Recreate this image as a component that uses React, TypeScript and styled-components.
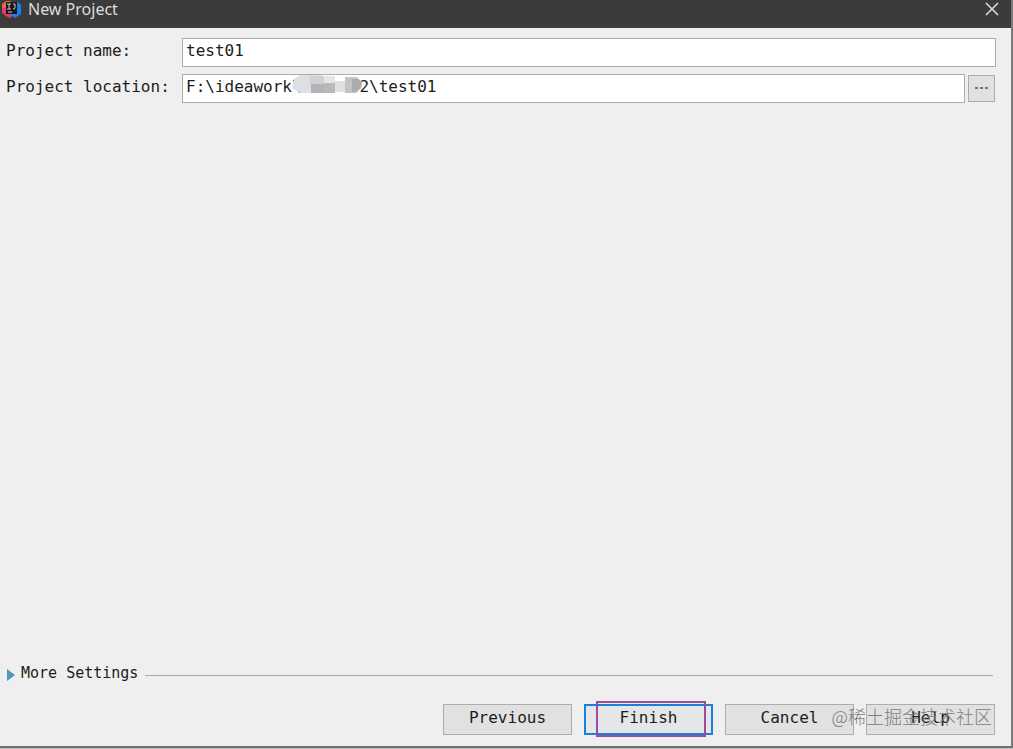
import React from 'react';
import styled, { createGlobalStyle } from 'styled-components';

const mono = '"DejaVu Sans Mono", "Liberation Mono", monospace';

const GlobalStyle = createGlobalStyle`
  *, *::before, *::after { box-sizing: border-box; }
  body { margin: 0; background: #bdbdbd; }
`;

const Window = styled.div`
  display: flex;
  flex-direction: column;
  min-height: calc(100vh - 1px);
  background: #efefef;
  border-right: 2px solid #77797a;
  border-bottom: 2px solid #727272;
`;

const TitleBar = styled.header`
  display: flex;
  align-items: flex-start;
  height: 28px;
  padding: 0 12px 0 2px;
  background: #3b3b3b;
`;

const Title = styled.h1`
  flex: 1;
  margin: 0 0 0 7px;
  font: 400 16px/19px "Noto Sans", "Open Sans", sans-serif;
  color: #dcdcdc;
`;

const CloseButton = styled.button`
  display: flex;
  padding: 2px 0 0;
  border: 0;
  background: none;
`;

const Fields = styled.form`
  display: flex;
  flex-direction: column;
  gap: 7px;
  padding: 10px 15px 0 6px;
`;

const Field = styled.div`
  display: flex;
  align-items: center;
`;

const Label = styled.label`
  flex: none;
  width: 176px;
  padding-bottom: 4px;
  font: 16px/24px ${mono};
  color: #1c1c1c;
  white-space: nowrap;
`;

const InputWrap = styled.div`
  position: relative;
  flex: 1;
  display: flex;
`;

const TextInput = styled.input`
  width: 100%;
  height: 29px;
  padding: 0 3px 4px;
  border: 1px solid #acacac;
  border-radius: 0;
  background: #fff;
  font: 16px/24px ${mono};
  color: #1c1c1c;
  outline: none;
`;

const Mosaic = styled.svg`
  position: absolute;
  left: 110px;
  top: 1px;
`;

const BrowseButton = styled.button`
  display: flex;
  align-items: center;
  justify-content: center;
  width: 27px;
  height: 27px;
  margin: 0 1px 0 3px;
  padding: 0;
  border: 1px solid #acacac;
  background: #e1e1e1;
`;

const MoreSettings = styled.div`
  display: flex;
  align-items: center;
  gap: 7px;
  margin-top: auto;
  padding: 0 18px 0 7px;
`;

const Disclosure = styled.button`
  display: flex;
  align-items: center;
  gap: 6px;
  padding: 0;
  border: 0;
  background: none;
  font: 15px/20px ${mono};
  color: #1c1c1c;
`;

const DisclosureText = styled.span`
  padding-bottom: 4px;
`;

const Rule = styled.hr`
  flex: 1;
  height: 1px;
  margin: 0;
  border: 0;
  background: #a9a9a9;
`;

const Footer = styled.footer`
  position: relative;
  display: flex;
  justify-content: flex-end;
  gap: 12px;
  padding: 17px 16px 11px 0;
`;

const ActionButton = styled.button<{ $primary?: boolean }>`
  width: 129px;
  height: 31px;
  padding: 0 0 4px;
  border: ${(p) => (p.$primary ? '2px solid #1b80d8' : '1px solid #adadad')};
  background: ${(p) => (p.$primary ? '#e4e6e8' : '#e1e1e1')};
  font: 16px/20px ${mono};
  color: #1c1c1c;
`;

const Marked = styled.div`
  position: relative;
  display: flex;
  &::after {
    content: '';
    position: absolute;
    inset: -3px 7px -2px 12px;
    border: 2px solid #9c4ba0;
    pointer-events: none;
  }
`;

const Watermark = styled.span`
  position: absolute;
  right: 19px;
  top: 16px;
  font: 300 18px/27px "Noto Sans CJK SC", sans-serif;
  color: #7c7c7c;
  pointer-events: none;
`;

const Logo = () => (
  <svg width="19" height="19" viewBox="0 0 19 19" aria-hidden="true">
    <path d="M0 4 4 1h5v8H0z" fill="#e8674a" />
    <path d="M0 8h5l7 7-4 3-4-2-4-3z" fill="#e23a66" />
    <path d="M11 2h5l3 3v9l-6 4-4-3z" fill="#1a7fe6" />
    <rect x="4" y="2" width="11" height="12" fill="#1a1718" />
    <path d="M5 4h4M7 4v5M5 9h4M11 4h2v4q0 1-2 1" stroke="#c9c4c2" fill="none" />
    <path d="M6 12h4" stroke="#c9c4c2" />
  </svg>
);

export default function App() {
  return (
    <>
      <GlobalStyle />
      <Window>
        <TitleBar>
          <Logo />
          <Title>New Project</Title>
          <CloseButton type="button" aria-label="Close">
            <svg width="14" height="14" viewBox="0 0 14 14">
              <path d="M1 1 13 13M13 1 1 13" stroke="#dedede" strokeWidth="1.500" />
            </svg>
          </CloseButton>
        </TitleBar>
        <Fields>
          <Field>
            <Label htmlFor="name">Project name:</Label>
            <InputWrap>
              <TextInput id="name" defaultValue="test01" />
            </InputWrap>
          </Field>
          <Field>
            <Label htmlFor="location">Project location:</Label>
            <InputWrap>
              <TextInput id="location" defaultValue={'F:\\ideawork\\      2\\test01'} />
              <Mosaic width="72" height="19" viewBox="0 0 72 19" aria-hidden="true">
                <path d="M2 4 8 0h22v18H8L0 13z" fill="#dcdfe5" />
                <rect x="18" y="1" width="14" height="9" fill="#d0d1d4" />
                <rect x="19" y="9" width="13" height="9" fill="#b4b4b6" />
                <rect x="32" y="1" width="11" height="7" fill="#e6e6e8" />
                <rect x="32" y="8" width="11" height="10" fill="#b9b9bb" />
                <rect x="43" y="6" width="10" height="11" fill="#e0e0e0" />
                <path d="M53 2h12l5 5-1 6-5 5H53z" fill="#c4c4c6" />
                <path d="M60 4h6l4 4-1 5-5 4h-4z" fill="#ababad" />
              </Mosaic>
            </InputWrap>
            <BrowseButton type="button" aria-label="Browse">
              <svg width="13" height="3" viewBox="0 0 13 3">
                <path d="M0 0h3v2H0zM5 0h3v2H5zM10 0h3v2h-3z" fill="#777" />
              </svg>
            </BrowseButton>
          </Field>
        </Fields>
        <MoreSettings>
          <Disclosure type="button" aria-expanded="false">
            <svg width="8" height="12" viewBox="0 0 8 12" aria-hidden="true">
              <path d="M0 0 8 6 0 12z" fill="#4c97c2" />
            </svg>
            <DisclosureText>More Settings</DisclosureText>
          </Disclosure>
          <Rule />
        </MoreSettings>
        <Footer>
          <ActionButton type="button">Previous</ActionButton>
          <Marked>
            <ActionButton type="button" $primary>Finish</ActionButton>
          </Marked>
          <ActionButton type="button">Cancel</ActionButton>
          <ActionButton type="button">Help</ActionButton>
          <Watermark>@稀土掘金技术社区</Watermark>
        </Footer>
      </Window>
    </>
  );
}
